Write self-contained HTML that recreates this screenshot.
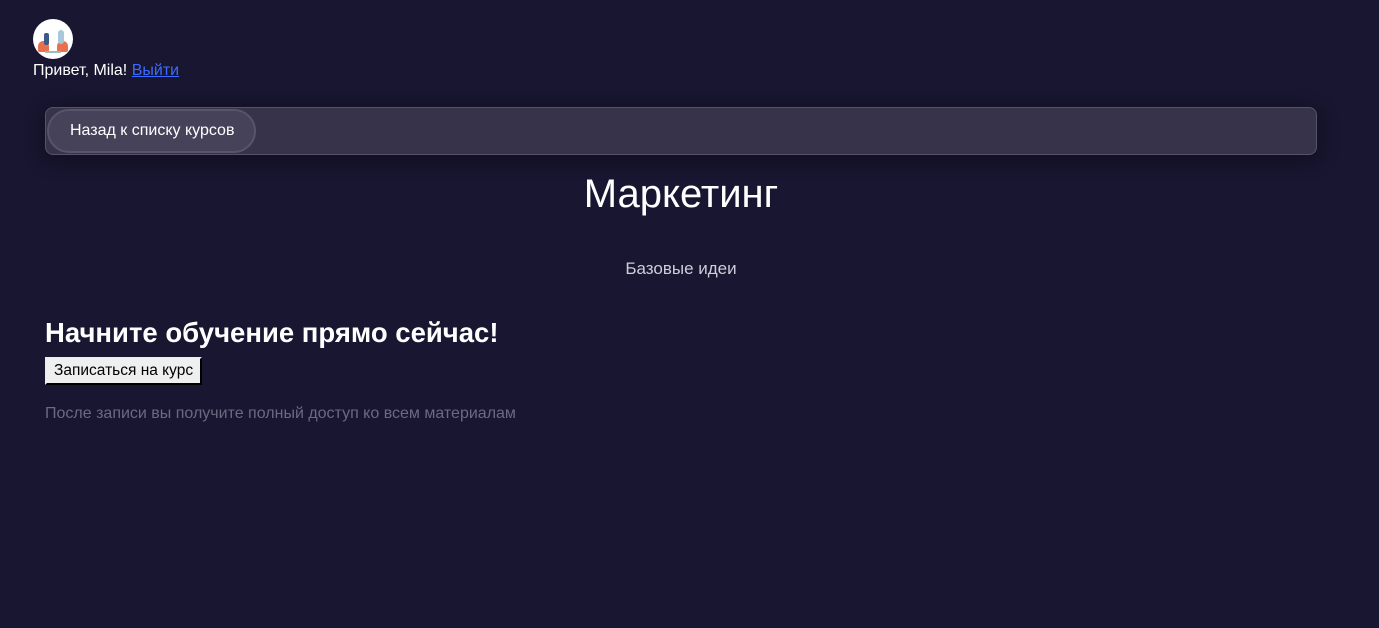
<!DOCTYPE html>
<html><head><meta charset="utf-8"><style>
body{margin:0;background:#181630;width:1379px;height:628px;overflow:hidden;font-family:"Liberation Sans","DejaVu Sans",sans-serif;color:#fff;position:relative}
.av{position:absolute;left:33px;top:19px;width:40px;height:40px;border-radius:50%;background:#fff;overflow:hidden}
.hi{position:absolute;left:33px;top:62px;font-size:16px}
.hi a{color:#3b6cff;text-decoration:underline}
.bar{position:absolute;left:45px;top:107px;width:1270px;height:46px;border:1px solid #55526a;border-radius:8px;background:#37334b;box-shadow:0 4px 20px rgba(0,0,0,.4)}
.btn{position:absolute;left:1px;top:1px;width:209px;height:44px;border:2px solid #57546c;border-radius:22px;background:#45425a;box-sizing:border-box;font-size:16px;line-height:40px;padding-left:21px}
h1{position:absolute;top:172px;left:0;width:1362px;text-align:center;margin:0;font-weight:normal;font-size:40px}
.sub{position:absolute;top:259px;left:0;width:1362px;text-align:center;font-size:17px;color:#cfcdda}
h2{position:absolute;left:45px;top:317px;margin:0;font-size:27.5px;font-weight:bold}
.en{position:absolute;left:45px;top:357px;height:28px;padding:0 7px;background:#efefef;color:#000;border:2px solid;font-size:15.5px;line-height:24px;box-sizing:border-box;border-color:#eee #000 #000 #eee}
.note{position:absolute;left:45px;top:405px;font-size:16px;color:#6b6a80}
</style></head><body>
<div class="av"><div style="position:absolute;left:5px;top:22px;width:11px;height:11px;background:#e8704f;border-radius:5px 5px 2px 2px"></div><div style="position:absolute;left:24px;top:22px;width:11px;height:11px;background:#e8704f;border-radius:5px 5px 2px 2px"></div><div style="position:absolute;left:11px;top:14px;width:5px;height:12px;background:#3a5a8a;border-radius:2px"></div><div style="position:absolute;left:25px;top:11px;width:6px;height:14px;background:#a6c8d8;border-radius:3px"></div><div style="position:absolute;left:12px;top:32px;width:16px;height:2px;background:#9bb"></div></div>
<div class="hi">Привет, Mila! <a>Выйти</a></div>
<div class="bar"><div class="btn">Назад к списку курсов</div></div>
<h1>Маркетинг</h1>
<div class="sub">Базовые идеи</div>
<h2>Начните обучение прямо сейчас!</h2>
<div class="en">Записаться на курс</div>
<div class="note">После записи вы получите полный доступ ко всем материалам</div>
</body></html>
